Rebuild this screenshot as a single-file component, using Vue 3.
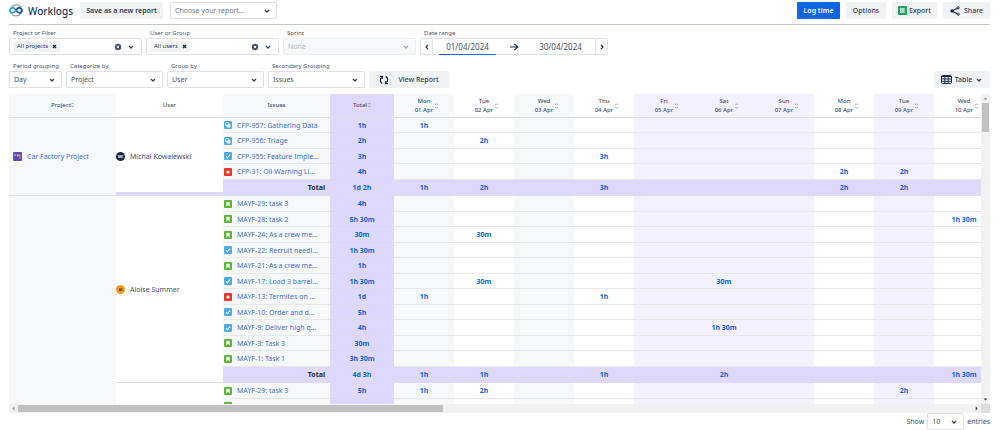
<script setup>
import { ref } from 'vue'

const report = ref('')
const startDate = ref('01/04/2024')
const endDate = ref('30/04/2024')
const pageSize = ref('10')

const pickers = [
  { id: 'project', label: 'Project or Filter', tag: 'All projects' },
  { id: 'user', label: 'User or Group', tag: 'All users' },
]

const groupings = [
  { id: 'period', label: 'Period grouping', value: 'Day', size: 'narrow' },
  { id: 'categorize', label: 'Categorize by', value: 'Project', size: 'medium' },
  { id: 'group', label: 'Group by', value: 'User', size: 'medium' },
  { id: 'secondary', label: 'Secondary Grouping', value: 'Issues', size: 'medium' },
]

const days = [
  { name: 'Mon', date: '01 Apr', tone: 'grey' },
  { name: 'Tue', date: '02 Apr', tone: 'plain' },
  { name: 'Wed', date: '03 Apr', tone: 'grey' },
  { name: 'Thu', date: '04 Apr', tone: 'plain' },
  { name: 'Fri', date: '05 Apr', tone: 'off' },
  { name: 'Sat', date: '06 Apr', tone: 'off' },
  { name: 'Sun', date: '07 Apr', tone: 'off' },
  { name: 'Mon', date: '08 Apr', tone: 'plain' },
  { name: 'Tue', date: '09 Apr', tone: 'off' },
  { name: 'Wed', date: '10 Apr', tone: 'plain' },
]

const rows = [
  { type: 'subtask', issue: 'CFP-957: Gathering Data', total: '1h', log: { 0: '1h' }, project: { name: 'Car Factory Project', span: 5 }, user: { name: 'Michał Kowalewski', initials: 'MK', tone: 'navy', span: 5, closed: true } },
  { type: 'subtask', issue: 'CFP-956: Triage', total: '2h', log: { 1: '2h' } },
  { type: 'task', issue: 'CFP-955: Feature Imple...', total: '3h', log: { 3: '3h' } },
  { type: 'bug', issue: 'CFP-31: Oil Warning Li...', total: '4h', log: { 7: '2h', 8: '2h' } },
  { sum: true, last: true, total: '1d 2h', log: { 0: '1h', 1: '2h', 3: '3h', 7: '2h', 8: '2h' } },
  { type: 'story', issue: 'MAYF-29: task 3', total: '4h', log: {}, project: { span: 14 }, user: { name: 'Aloise Summer', initials: 'AS', tone: 'orange', span: 12 } },
  { type: 'story', issue: 'MAYF-28: task 2', total: '5h 30m', log: { 9: '1h 30m' } },
  { type: 'story', issue: 'MAYF-24: As a crew me...', total: '30m', log: { 1: '30m' } },
  { type: 'task', issue: 'MAYF-22: Recruit needl...', total: '1h 30m', log: {} },
  { type: 'story', issue: 'MAYF-21: As a crew me...', total: '1h', log: {} },
  { type: 'task', issue: 'MAYF-17: Load 3 barrel...', total: '1h 30m', log: { 1: '30m', 5: '30m' } },
  { type: 'bug', issue: 'MAYF-13: Termites on ...', total: '1d', log: { 0: '1h', 3: '1h' } },
  { type: 'task', issue: 'MAYF-10: Order and d...', total: '5h', log: {} },
  { type: 'task', issue: 'MAYF-9: Deliver high q...', total: '4h', log: { 5: '1h 30m' } },
  { type: 'story', issue: 'MAYF-3: Task 3', total: '30m', log: {} },
  { type: 'story', issue: 'MAYF-1: Task 1', total: '3h 30m', log: {} },
  { sum: true, total: '4d 3h', log: { 0: '1h', 1: '1h', 3: '1h', 5: '2h', 9: '1h 30m' } },
  { type: 'story', issue: 'MAYF-29: task 3', total: '5h', log: { 0: '1h', 1: '2h', 8: '2h' }, user: { span: 2 } },
  { type: 'story', issue: 'MAYF-28: task 2', total: '2h 30m', log: { 1: '30m' } },
]

const thumbWidth = 44.5
const thumbHeight = 10
</script>

<template>
  <main class="page">
    <header class="topbar">
      <svg class="logo" viewBox="0 0 28 26" aria-hidden="true">
        <path d="M4 7A12 11 0 0 1 24 6" fill="none" stroke="#9aa5b5" stroke-width="2.4" />
        <path d="M6 21A12 11 0 0 0 23 20" fill="none" stroke="#9aa5b5" stroke-width="2.4" />
        <path d="M14 13C11 8 8 7 6 8C1 9 1 17 6 18C9 18 11 17 14 13" fill="none" stroke="#3aa3dc" stroke-width="4" />
        <path d="M14 13C17 8 20 7 22 8C27 9 27 17 22 18C19 18 17 17 14 13" fill="none" stroke="#2b5f92" stroke-width="4" />
      </svg>
      <h1>Worklogs</h1>
      <button class="btn save" type="button">Save as a new report</button>
      <div class="select report">
        <select v-model="report" aria-label="Report" class="muted">
          <option value="">Choose your report...</option>
        </select>
        <svg class="chev" viewBox="0 0 8 8"><path d="M2 3L4 5L6 3" /></svg>
      </div>
      <div class="actions">
        <button class="btn primary" type="button">Log time</button>
        <button class="btn options" type="button">Options</button>
        <button class="btn export" type="button">
          <svg class="ico" viewBox="0 0 9 9" aria-hidden="true">
            <rect width="9" height="9" rx="1" fill="#22a06b" />
            <rect x="2" y="2.4" width="5" height="4.2" fill="#fff" />
            <path d="M2.8 3.3L4.4 5.7M4.4 3.3L2.8 5.7M5.3 3.5H7M5.3 4.5H7M5.3 5.5H7" stroke="#22a06b" stroke-width=".6" />
          </svg>
          Export
        </button>
        <button class="btn share" type="button">
          <svg class="ico big" viewBox="0 0 10 10" aria-hidden="true">
            <path d="M8.2 1.8L2 5L8.2 8.2" fill="none" stroke="#172b4d" stroke-width="1.1" />
            <circle cx="2" cy="5" r="1.7" fill="#172b4d" />
            <circle cx="8.2" cy="1.8" r="1.1" fill="#f1f2f4" stroke="#172b4d" />
            <circle cx="8.2" cy="8.2" r="1.1" fill="#f1f2f4" stroke="#172b4d" />
          </svg>
          Share
        </button>
      </div>
    </header>

    <section class="filters">
      <div v-for="p in pickers" :key="p.id" class="field wide">
        <label :for="p.id">{{ p.label }}</label>
        <div class="picker">
          <span class="tag">{{ p.tag }}
            <button type="button" :aria-label="'Remove ' + p.tag">
              <svg viewBox="0 0 5 5"><path d="M1 1L4 4M4 1L1 4" stroke="#172b4d" stroke-width="1.3" /></svg>
            </button>
          </span>
          <input :id="p.id" type="text" />
          <button class="clear" type="button" aria-label="Clear">
            <svg viewBox="0 0 8 8"><circle cx="4" cy="4" r="3.2" fill="#44546f" /><path d="M2.8 2.8L5.2 5.2M5.2 2.8L2.8 5.2" stroke="#fff" stroke-width=".9" /></svg>
          </button>
          <svg class="caret" viewBox="0 0 8 8"><path d="M2 3L4 5L6 3" /></svg>
        </div>
      </div>
      <div class="field wide">
        <label for="sprint">Sprint</label>
        <div class="select disabled">
          <select id="sprint" disabled><option>None</option></select>
          <svg class="chev" viewBox="0 0 8 8"><path d="M2 3L4 5L6 3" /></svg>
        </div>
      </div>
      <div class="field dates">
        <label for="start">Date range</label>
        <div class="range">
          <button type="button" aria-label="Previous period"><svg viewBox="0 0 8 8"><path d="M5 1.8L3 4L5 6.2" /></svg></button>
          <div class="span">
            <input id="start" v-model="startDate" class="active" type="text" />
            <svg class="arrow" viewBox="0 0 10 10"><path d="M1 5H8.5M5.5 1.8L8.7 5L5.5 8.2" /></svg>
            <input v-model="endDate" type="text" aria-label="End date" />
          </div>
          <button type="button" aria-label="Next period"><svg viewBox="0 0 8 8"><path d="M3 1.8L5 4L3 6.2" /></svg></button>
        </div>
      </div>
    </section>

    <section class="filters second">
      <div v-for="g in groupings" :key="g.id" class="field" :class="g.size">
        <label :for="g.id">{{ g.label }}</label>
        <div class="select">
          <select :id="g.id"><option>{{ g.value }}</option></select>
          <svg class="chev" viewBox="0 0 8 8"><path d="M2 3L4 5L6 3" /></svg>
        </div>
      </div>
      <button class="btn view" type="button">
        <svg class="ico big" viewBox="0 0 10 10" aria-hidden="true">
          <path d="M1 1.4H3.4V3.8M3.4 1.6C.6 3.4 .6 6.8 3.2 8.6M9 8.6H6.6V6.2M6.6 8.4C9.4 6.6 9.4 3.2 6.8 1.4" fill="none" stroke="#172b4d" stroke-width="1.3" />
        </svg>
        View Report
      </button>
      <button class="btn mode" type="button">
        <svg class="grid-ico" viewBox="0 0 11 9" aria-hidden="true">
          <rect x=".5" y=".5" width="10" height="8" rx="1" fill="#fff" stroke="#172b4d" />
          <path d="M0 1.5H11M0 4H11M0 6.3H11M3.8 1V9M7.2 1V9" stroke="#172b4d" />
        </svg>
        Table
        <svg class="caret" viewBox="0 0 8 8"><path d="M2 3L4 5L6 3" /></svg>
      </button>
    </section>

    <section class="sheet">
      <div class="viewport">
        <table>
          <colgroup>
            <col class="c-wide" /><col class="c-wide" /><col class="c-wide" /><col class="c-total" />
            <col v-for="d in days" :key="d.date" class="c-day" />
          </colgroup>
          <thead>
            <tr>
              <th class="grey">Project<svg class="sort tight" viewBox="0 0 4 8"><path d="M.5 3L2 1.3L3.5 3M.5 5L2 6.7L3.5 5" /></svg></th>
              <th>User</th>
              <th class="grey">Issues</th>
              <th class="total">Total<svg class="sort" viewBox="0 0 4 8"><path d="M.5 3L2 1.3L3.5 3M.5 5L2 6.7L3.5 5" /></svg></th>
              <th v-for="d in days" :key="d.date" :class="d.tone">
                <div class="day">
                  <span>{{ d.name }}<br />{{ d.date }}</span>
                  <svg class="sort" viewBox="0 0 4 8"><path d="M.5 2.5L2 1L3.5 2.5M.5 5.5L2 7L3.5 5.5" /></svg>
                </div>
              </th>
            </tr>
          </thead>
          <tbody>
            <tr v-for="(r, i) in rows" :key="i" :class="{ sum: r.sum, last: r.last }">
              <td v-if="r.project" :rowspan="r.project.span" class="project grey">
                <div v-if="r.project.name" class="who">
                  <svg class="avatar" viewBox="0 0 9 9" aria-hidden="true">
                    <rect width="9" height="9" rx="1" fill="#5e4db2" />
                    <path d="M3.6 2.4H7.4V7L6 5H4.6Z" fill="#f5b52e" />
                    <path d="M1 3H3M4.6 3.6H6.4" stroke="#e6dcff" stroke-width=".8" />
                    <circle cx="5.8" cy="4.2" r=".8" fill="#7a3b12" />
                  </svg>
                  <a href="#">{{ r.project.name }}</a>
                </div>
              </td>
              <td v-if="r.user" :rowspan="r.user.span" class="user" :class="{ closed: r.user.closed }">
                <div v-if="r.user.name" class="who">
                  <span class="face" :class="r.user.tone"><svg viewBox="0 0 9 9"><text x="4.5" y="5.8" text-anchor="middle">{{ r.user.initials }}</text></svg></span>
                  <span>{{ r.user.name }}</span>
                </div>
              </td>
              <td v-if="r.sum" class="sum-label">Total</td>
              <td v-else class="issue grey">
                <div class="line">
                  <svg class="type" viewBox="0 0 8 8" aria-hidden="true">
                    <g v-if="r.type === 'subtask'">
                      <rect width="8" height="8" rx="1" fill="#4bade8" />
                      <rect x="1.7" y="1.7" width="3.2" height="3.2" rx=".4" fill="none" stroke="#fff" stroke-width=".8" />
                      <rect x="3.2" y="3.2" width="3.2" height="3.2" rx=".4" fill="#fff" />
                    </g>
                    <g v-else-if="r.type === 'task'">
                      <rect width="8" height="8" rx="1" fill="#4bade8" />
                      <path d="M2 4.2L3.4 5.6L6.1 2.6" fill="none" stroke="#fff" stroke-width="1.1" />
                    </g>
                    <g v-else-if="r.type === 'bug'">
                      <rect width="8" height="8" rx="1" fill="#e5392a" />
                      <circle cx="4" cy="4" r="1.6" fill="#fff" />
                    </g>
                    <g v-else>
                      <rect width="8" height="8" rx="1" fill="#5bb532" />
                      <path d="M2.5 2H5.5V6L4 4.8L2.5 6Z" fill="#fff" stroke="#fff" stroke-width=".4" />
                    </g>
                  </svg>
                  <a href="#">{{ r.issue }}</a>
                </div>
              </td>
              <td class="total num">{{ r.total }}</td>
              <td v-for="(d, k) in days" :key="k" class="num" :class="d.tone">{{ r.log[k] }}</td>
            </tr>
          </tbody>
        </table>
      </div>
      <div class="bar vertical">
        <svg viewBox="0 0 9 9"><path d="M2.5 5.5L4.5 3.5L6.5 5.5Z" fill="#8a8a8a" /></svg>
        <div class="track"><div class="thumb" :style="{ height: thumbHeight + '%' }"></div></div>
        <svg viewBox="0 0 9 9"><path d="M2.5 3.5L4.5 5.5L6.5 3.5Z" fill="#404040" /></svg>
      </div>
      <div class="bar horizontal">
        <svg viewBox="0 0 9 9"><path d="M5.3 2.5L3.3 4.5L5.3 6.5Z" fill="#8a8a8a" /></svg>
        <div class="track"><div class="thumb" :style="{ width: thumbWidth + '%' }"></div></div>
        <svg viewBox="0 0 9 9"><path d="M3.7 2.5L5.7 4.5L3.7 6.5Z" fill="#404040" /></svg>
      </div>
      <div class="corner"></div>
    </section>

    <footer class="pager">
      <label for="size">Show</label>
      <div class="select size">
        <select id="size" v-model="pageSize"><option>10</option></select>
        <svg class="chev" viewBox="0 0 8 8"><path d="M2 3L4 5L6 3" /></svg>
      </div>
      <span>entries</span>
    </footer>
  </main>
</template>

<style>
body {
  margin: 0;
  background: #fff;
}
</style>

<style scoped>
* {
  box-sizing: border-box;
}
.page {
  display: flex;
  flex-direction: column;
  height: 100vh;
  padding: 0 9px;
  overflow: hidden;
  font-family: "Noto Sans", "Open Sans", sans-serif;
  font-size: 7px;
  line-height: 9px;
  color: #44546f;
}
button,
input,
select {
  margin: 0;
  padding: 0;
  border: 0;
  background: none;
  font: inherit;
  color: inherit;
}
svg {
  display: block;
  flex: none;
}
a {
  color: #3b73df;
  text-decoration: none;
}
.topbar {
  display: flex;
  align-items: center;
  flex: none;
  height: 25px;
  padding-bottom: 3px;
  border-bottom: 1px solid #c1c7d4;
}
.logo {
  width: 14px;
  height: 13px;
}
h1 {
  width: 52px;
  margin: 0 0 0 5px;
  font-size: 10px;
  line-height: 14px;
  font-weight: 500;
  color: #253858;
}
.btn {
  display: flex;
  align-items: center;
  justify-content: center;
  height: 17px;
  border-radius: 1px;
  background: #f1f2f4;
  font-weight: 500;
  color: #2c3e5d;
  white-space: nowrap;
}
.save {
  width: 83px;
  margin-right: 7px;
  font-weight: 600;
}
.actions {
  display: flex;
  gap: 6px;
  margin-left: auto;
}
.primary {
  width: 43px;
  background: #0c66e4;
  color: #fff;
  font-weight: 600;
}
.options {
  width: 40px;
}
.export {
  gap: 2px;
  width: 45px;
}
.share {
  gap: 4px;
  width: 47px;
}
.ico {
  width: 9px;
  height: 9px;
}
.big {
  width: 10px;
  height: 10px;
}
.select {
  position: relative;
  height: 17px;
}
.select select {
  appearance: none;
  width: 100%;
  height: 17px;
  padding: 0 4px;
  border: 1px solid #dfe1e6;
  border-radius: 2px;
  background: #fff;
  opacity: 1;
}
.report {
  width: 107px;
}
.select .muted {
  color: #6b778c;
}
.chev,
.caret {
  width: 8px;
  height: 8px;
}
.chev {
  position: absolute;
  top: 5px;
  right: 6px;
  pointer-events: none;
}
.chev path,
.caret path {
  fill: none;
  stroke: #344563;
  stroke-width: 1.3;
}
.disabled select {
  background: #f7f8f9;
  border-color: #eceef1;
  color: #b3b9c4;
}
.disabled .chev path {
  stroke: #a5adba;
}
.filters {
  display: flex;
  align-items: flex-end;
  flex: none;
  gap: 4px;
  padding-top: 4px;
}
.second {
  padding: 7px 0 6px;
}
.field label {
  display: block;
  padding-left: 4px;
  font-size: 6px;
  line-height: 9px;
  white-space: nowrap;
}
.wide {
  width: 133px;
}
.medium {
  width: 97px;
}
.narrow {
  width: 53px;
}
.picker {
  display: flex;
  align-items: center;
  height: 17px;
  padding: 0 6px 0 4px;
  border: 1px solid #dfe1e6;
  border-radius: 2px;
}
.picker input {
  flex: 1;
  min-width: 0;
}
.tag {
  display: flex;
  align-items: center;
  gap: 4px;
  height: 11px;
  padding: 0 3px;
  border-radius: 1px;
  background: #f1f2f4;
  font-size: 6px;
  color: #253858;
}
.tag svg {
  width: 5px;
  height: 5px;
}
.clear svg {
  width: 8px;
  height: 8px;
}
.clear {
  margin-right: 5px;
}
.range {
  display: flex;
  height: 17px;
}
.range > button {
  display: flex;
  align-items: center;
  justify-content: center;
  width: 13px;
  border: 1px solid #dfe1e6;
  border-radius: 2px;
}
.range button svg {
  width: 8px;
  height: 8px;
}
.range path {
  fill: none;
  stroke: #172b4d;
  stroke-width: 1.2;
}
.span {
  display: flex;
  align-items: center;
  justify-content: space-between;
  width: 162px;
  padding: 0 6px;
  border: solid #dfe1e6;
  border-width: 1px 0;
}
.span input {
  width: 57px;
  height: 17px;
  font-size: 8px;
  text-align: center;
  border-bottom: 1px solid transparent;
}
.span .active {
  border-bottom-color: #0c66e4;
}
.arrow {
  width: 10px;
  height: 10px;
}
.view {
  gap: 9px;
  width: 80px;
}
.mode {
  gap: 3px;
  width: 56px;
  margin-left: auto;
}
.grid-ico {
  width: 11px;
  height: 9px;
}
.sheet {
  display: grid;
  grid-template-columns: minmax(0, 1fr) 9px;
  grid-template-rows: minmax(0, 1fr) 9px;
  flex: 1;
  min-height: 0;
}
.viewport {
  overflow: hidden;
}
table {
  width: 985px;
  table-layout: fixed;
  border-spacing: 0;
}
.c-wide {
  width: 107px;
}
.c-total {
  width: 64px;
}
.c-day {
  width: 60px;
}
th {
  height: 24px;
  padding: 0;
  border-bottom: 1px solid #dcdfe4;
  font-size: 6px;
  font-weight: 500;
  text-align: center;
}
td {
  height: 15px;
  padding: 0;
  border-bottom: 1px solid #e6e8eb;
  line-height: 9px;
}
tr:nth-child(even) td,
.sum td {
  height: 16px;
}
.grey {
  background: #f7f8f9;
}
.off {
  background: #f3f0ff;
}
.total,
.sum td {
  background: #dfd8fd;
}
td.total {
  border-color: #dcd6f3;
}
.sum td {
  border-color: #dfd8fd;
}
.last td,
td.project,
td.user {
  border-color: #dcdfe4;
}
.num {
  font-weight: 700;
  text-align: center;
  color: #0c66e4;
}
.sum-label {
  padding-right: 5px;
  font-weight: 700;
  text-align: right;
  color: #172b4d;
}
.day {
  display: flex;
  align-items: center;
  justify-content: center;
  gap: 1px;
  padding-left: 5px;
}
.sort {
  display: inline-block;
  width: 3px;
  height: 6px;
  margin-left: 1px;
  vertical-align: middle;
}
.tight {
  margin-left: 0;
}
.sort path {
  fill: none;
  stroke: #7a869a;
  stroke-width: 1;
}
.who,
.line {
  display: flex;
  align-items: center;
  gap: 5px;
}
.project .who {
  padding-left: 4px;
}
.user .who {
  padding-left: 0;
}
.closed {
  box-shadow: inset 0 -3px #dfd8fd;
}
.avatar,
.face,
.face svg {
  width: 9px;
  height: 9px;
}
.face {
  border-radius: 50%;
}
.face text {
  font-size: 3px;
  font-weight: 700;
  fill: #fff;
}
.navy {
  background: #172b4d;
}
.orange {
  background: #ff991f;
}
.orange text {
  fill: #172b4d;
}
.line {
  padding-left: 1px;
  white-space: nowrap;
}
.type {
  width: 8px;
  height: 8px;
}
.bar {
  display: flex;
  background: #f1f1f1;
}
.bar svg {
  width: 9px;
  height: 9px;
}
.track {
  flex: 1;
}
.thumb {
  background: #c1c1c1;
}
.vertical {
  flex-direction: column;
}
.vertical .thumb {
  margin: 0 1px;
}
.horizontal .track {
  display: flex;
  padding: 1px 0;
}
.corner {
  background: #dcdcdc;
}
.pager {
  display: flex;
  align-items: center;
  justify-content: flex-end;
  gap: 3px;
  flex: none;
  height: 17px;
}
.size {
  width: 37px;
  height: 17px;
}
</style>
